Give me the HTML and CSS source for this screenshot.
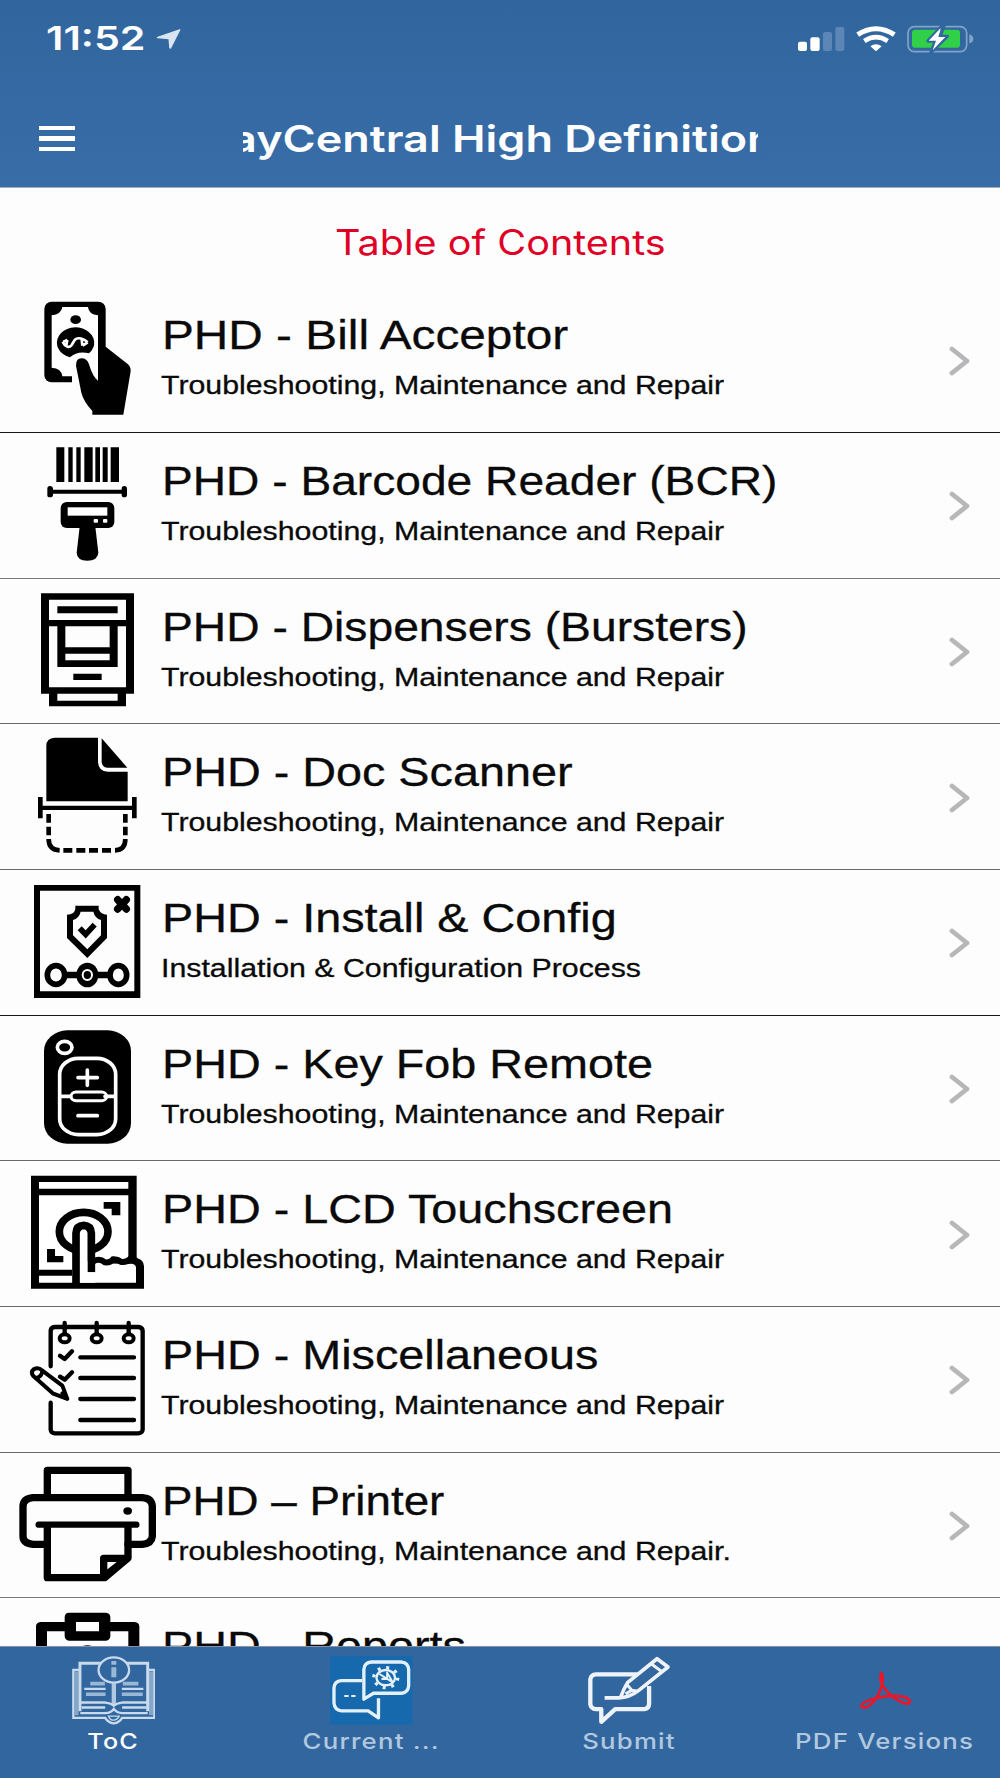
FILE: index.html
```html
<!DOCTYPE html>
<html lang="en">
<head>
<meta charset="utf-8">
<title>PlayCentral High Definition</title>
<link rel="stylesheet" href="styles.css">
</head>
<body>
<div class="screen">
  <header class="header">
    <div class="status">
      <span class="time">11:52</span>
      <svg class="locate" viewBox="466 86 76 60"><path d="M541 87L512 144Q508 148 506 142L504 117L471 114Q465 112 471 109L535 87Q540 86 541 87Z" fill="#d9e5f0"/></svg>
      <div class="indicators">
        <svg width="47" height="26" viewBox="894 76 141 78" fill="#fff"><rect x="894" y="123" width="27" height="28" rx="6"/><rect x="931" y="110" width="28" height="41" rx="6"/><g fill="#5b86b5"><rect x="969" y="94" width="27" height="57" rx="6"/><rect x="1006" y="79" width="27" height="72" rx="6"/></g></svg>
        <svg width="40" height="26" viewBox="1068 76 120 78" fill="none" stroke="#fff"><path d="M1073 102Q1128 66 1183 102" stroke-width="15"/><path d="M1093 121Q1128 98 1163 121" stroke-width="14"/><path d="M1111 137Q1128 124 1145 137L1128 152Z" fill="#fff" stroke="none"/></svg>
        <svg width="67" height="28" viewBox="1222 73 201 84"><rect x="1225" y="78" width="176" height="75" rx="19" fill="none" stroke="#83a4c8" stroke-width="5"/><path d="M1409 101Q1421 105 1421 115T1409 128Z" fill="#83a4c8"/><rect x="1237" y="87" width="144" height="54" rx="9" fill="#30d048"/><path d="M1327 76L1285 121H1307L1294 155L1343 107H1321L1333 76Z" fill="#fff" stroke="#33679f" stroke-width="10" stroke-linejoin="round"/><path d="M1323 82L1287 120H1309L1299 149L1337 109H1315Z" fill="#fff"/></svg>
      </div>
    </div>
    <nav class="nav">
      <div class="menu"><i></i><i></i><i></i></div>
      <h1 class="nav-title"><span>PlayCentral High Definition</span></h1>
    </nav>
  </header>

  <main class="content">
    <h2 class="heading"><span>Table of Contents</span></h2>

    <section class="row dark">
      <svg class="icon" viewBox="0 22 486 437">
        <rect x="133" y="66" width="184" height="242" rx="22"/>
        <path fill="#fff" d="M187 82H264Q266 104 294 107V310H216V290H187Q185 266 155 264V107Q184 104 187 82Z"/>
        <ellipse cx="227" cy="120" rx="16" ry="13"/>
        <path d="M210 233A56 46 0 1 1 267 221Q232 213 210 233Z"/>
        <path d="M188 186C194 200 208 207 215 196L224 181C234 170 252 178 263 188M189 187L202 181M199 197L202 181M248 198L263 188M245 178L247 198" fill="none" stroke="#fff" stroke-width="8"/>
        <path d="M294 303V205L317 201L383 253Q393 262 392 275L370 405H277V394Q251 366 244 339L228 258Q227 237 244 236Q261 236 267 254Q278 292 294 303Z"/>
      </svg>
      <div class="text"><h3 class="t-bill">PHD - Bill Acceptor</h3><p>Troubleshooting, Maintenance and Repair</p></div>
      <svg class="chevron" viewBox="0 0 22 32"><path d="M3 4L18 16L3 28"/></svg>
    </section>

    <section class="row soft">
      <svg class="icon" viewBox="0 459 486 437">
        <path d="M169 502h24v104h-24zM205 502h13v104h-13zM229 502h13v104h-13zM253 502h25v104h-25zM286 502h14v104h-14zM308 502h15v104h-15zM332 502h25v104h-25z"/>
        <path d="M142 626Q142 618 150 618T159 626V629H365V626Q365 618 373 618T381 626V644Q381 652 373 652T365 644V641H159V644Q159 652 150 652T142 644Z"/>
        <rect x="182" y="666" width="161" height="78" rx="18"/>
        <path d="M239 740H286L295 818Q293 842 262 842T230 818Z"/>
        <g fill="#fff"><rect x="203" y="682" width="119" height="25"/><rect x="281" y="717" width="13" height="11" rx="3"/><rect x="309" y="717" width="13" height="11" rx="3"/></g>
      </svg>
      <div class="text"><h3 class="t-barcode">PHD - Barcode Reader (BCR)</h3><p>Troubleshooting, Maintenance and Repair</p></div>
      <svg class="chevron" viewBox="0 0 22 32"><path d="M3 4L18 16L3 28"/></svg>
    </section>

    <section class="row">
      <svg class="icon" viewBox="0 26 486 437">
        <path fill-rule="evenodd" d="M123 69H402V370H378V408H147V370H123ZM147 88V149H378V88ZM172 108H353V129H172ZM147 168V351H378V168H353V290H172V168ZM196 168H329V231H196ZM196 250H329V270H196ZM220 310H305V329H220ZM172 370H353V391H172Z"/>
      </svg>
      <div class="text"><h3 class="t-dispensers">PHD - Dispensers (Bursters)</h3><p>Troubleshooting, Maintenance and Repair</p></div>
      <svg class="chevron" viewBox="0 0 22 32"><path d="M3 4L18 16L3 28"/></svg>
    </section>

    <section class="row">
      <svg class="icon" viewBox="0 463 486 437">
        <path d="M164 504H294V578Q296 606 323 606H383V695H139V529Q139 505 164 504ZM305 506L382 594H322Q305 593 305 575Z"/>
        <path d="M114 682H128V708H396V682H410V746H396V721H128V746H114Z"/>
        <path d="M146 733V759M146 771V797M146 808Q146 841 179 842M376 733V759M376 771V797M376 808Q376 841 345 842M190 842H217M229 842H256M267 842H294M306 842H333" fill="none" stroke="#000" stroke-width="14"/>
      </svg>
      <div class="text"><h3>PHD - Doc Scanner</h3><p>Troubleshooting, Maintenance and Repair</p></div>
      <svg class="chevron" viewBox="0 0 22 32"><path d="M3 4L18 16L3 28"/></svg>
    </section>

    <section class="row dark">
      <svg class="icon" viewBox="0 15 486 437">
        <path fill-rule="evenodd" d="M102 60H421V399H102ZM120 77V379H403V77Z"/>
        <path fill-rule="evenodd" d="M226 122H296V133Q303 149 321 149V219L262 279L201 219V149Q222 149 226 133ZM242 140Q237 160 219 165V211L262 253L303 211V165Q285 160 280 140Z"/>
        <path d="M239 190L257 208L284 179" fill="none" stroke="#000" stroke-width="17"/>
        <path d="M353 104L379 132M379 104L353 132" stroke="#000" stroke-width="22" stroke-linecap="round"/>
        <path d="M190 330H335" stroke="#000" stroke-width="19"/>
        <g fill="#fff" stroke="#000" stroke-width="17"><ellipse cx="168" cy="330" rx="26" ry="28"/><ellipse cx="355" cy="330" rx="25" ry="28"/></g>
        <ellipse cx="262" cy="330" rx="33" ry="37"/><ellipse cx="262" cy="330" rx="14" ry="15" fill="none" stroke="#fff" stroke-width="6"/>
      </svg>
      <div class="text"><h3>PHD - Install &amp; Config</h3><p>Installation &amp; Configuration Process</p></div>
      <svg class="chevron" viewBox="0 0 22 32"><path d="M3 4L18 16L3 28"/></svg>
    </section>

    <section class="row">
      <svg class="icon" viewBox="0 452 486 437">
        <rect x="132" y="495" width="261" height="340" rx="70" ry="62"/>
        <g fill="none" stroke="#fff" stroke-width="11" stroke-linecap="round"><ellipse cx="194" cy="546" rx="22" ry="18"/><rect x="179" y="579" width="168" height="229" rx="56" ry="48"/><path d="M234 637H292M262 614V660M234 751H292M184 693H212M315 693H342"/><rect x="213" y="680" width="107" height="26" rx="15" ry="13" stroke-width="9"/></g>
      </svg>
      <div class="text"><h3>PHD - Key Fob Remote</h3><p>Troubleshooting, Maintenance and Repair</p></div>
      <svg class="chevron" viewBox="0 0 22 32"><path d="M3 4L18 16L3 28"/></svg>
    </section>

    <section class="row">
      <svg class="icon" viewBox="0 19 486 437">
        <path d="M93 63H410V310Q432 316 432 335V402H93Z"/>
        <path d="M117 82H385V102H117ZM117 122H385V310L286 335V384H216V345H117ZM117 363H216V384H117ZM280 325L386 328Q406 325 408 338V384H280Z" fill="#fff"/>
        <ellipse cx="251" cy="231" rx="73" ry="58" fill="#fff" stroke="#000" stroke-width="23"/>
        <path d="M262 300L286 298L300 292V353H262Z" fill="#fff"/>
        <path d="M228 390V235Q230 213 251 212Q272 213 274 235V353" fill="#fff" stroke="#000" stroke-width="23"/>
        <path d="M240 384V320H262V353H286V384Z" fill="#fff"/>
        <path d="M280 320Q298 309 315 323Q330 325 339 314Q352 313 364 322Q380 324 390 313L410 318" fill="none" stroke="#000" stroke-width="18"/>
        <path d="M311 142H361V182H335V162H311ZM141 283H165V304H190V323H141Z"/>
      </svg>
      <div class="text"><h3>PHD - LCD Touchscreen</h3><p>Troubleshooting, Maintenance and Repair</p></div>
      <svg class="chevron" viewBox="0 0 22 32"><path d="M3 4L18 16L3 28"/></svg>
    </section>

    <section class="row">
      <svg class="icon" viewBox="0 456 486 437" stroke="#000" stroke-width="13" stroke-linecap="round" stroke-linejoin="round">
        <g fill="none"><path d="M152 634V527Q153 517 164 516H415Q427 517 428 527V824Q427 834 415 835H164Q153 834 152 824V743"/>
        <path d="M241 607H402M241 669H402M241 732H402M241 795H402"/>
        <path d="M180 602L194 612L216 589M180 665L194 674L216 652"/>
        <path d="M194 504V534M290 504V534M386 504V534"/></g>
        <g fill="#fff" stroke-width="12"><ellipse cx="194" cy="550" rx="15" ry="12"/><ellipse cx="290" cy="550" rx="15" ry="12"/><ellipse cx="386" cy="550" rx="15" ry="12"/>
        <path d="M100 663Q91 651 101 643Q115 635 126 646L187 692L202 732L160 716Z"/><path d="M108 669Q126 665 127 648M187 715L199 728" fill="none"/></g>
      </svg>
      <div class="text"><h3>PHD - Miscellaneous</h3><p>Troubleshooting, Maintenance and Repair</p></div>
      <svg class="chevron" viewBox="0 0 22 32"><path d="M3 4L18 16L3 28"/></svg>
    </section>

    <section class="row soft">
      <svg class="icon" viewBox="0 38 486 437" fill="none" stroke="#000" stroke-width="22" stroke-linejoin="round" stroke-linecap="round">
        <path d="M142 165V90H384V165M140 312H99Q69 309 69 288V197Q70 175 99 172H427Q455 174 457 197V288Q455 309 427 312H384"/>
        <path d="M116 253H409" stroke-width="19"/><path d="M142 258V412H314L384 353V258"/><path d="M311 410V354H382Z"/><ellipse cx="383" cy="212" rx="13" ry="11" fill="#000" stroke="none"/>
      </svg>
      <div class="text"><h3 class="t-printer">PHD – Printer</h3><p>Troubleshooting, Maintenance and Repair.</p></div>
      <svg class="chevron" viewBox="0 0 22 32"><path d="M3 4L18 16L3 28"/></svg>
    </section>

    <section class="row">
      <svg class="icon" viewBox="0 475 486 437">
        <path fill-rule="evenodd" d="M121 547H194V532Q195 519 207 519H318Q330 520 331 532V547H404Q417 548 418 560V880H108V560Q109 548 121 547ZM228 547V575H297V547ZM141 575V850H385V575H331V590Q330 602 318 603H207Q195 602 194 590V575Z"/>
        <ellipse cx="262" cy="645" rx="35" ry="28"/>
      </svg>
      <div class="text"><h3>PHD - Reports</h3><p>Troubleshooting, Maintenance and Repair</p></div>
      <svg class="chevron" viewBox="0 0 22 32"><path d="M3 4L18 16L3 28"/></svg>
    </section>
  </main>

  <footer class="tabs">
    <div class="tab active">
      <svg viewBox="215 648 250 206" fill="none" stroke="#c8daeb" stroke-width="7">
        <path d="M239 690H219V834H315Q323 848 341 851Q358 848 366 834H463V690H443"/><path d="M229 695V826M453 695V826" stroke-width="12" opacity=".55"/>
        <path d="M303 670H239V814M379 670H443V814" stroke-width="9"/><path d="M341 730V794" stroke-width="13" opacity=".85"/>
        <path d="M240 788H315Q334 790 341 798Q348 790 366 788H443M244 803H315M366 803H440M240 820H315Q333 819 341 807Q350 819 366 820H443"/>
        <path d="M270 731H314M368 731H415M257 763H316M365 763H428" stroke-width="11" opacity=".7"/><path d="M252 747H316M365 747H430" stroke-width="7"/>
        <path d="M325 829H357Q352 840 341 841T325 829Z" fill="#31669f" stroke-width="4"/>
        <ellipse cx="341" cy="690" rx="46" ry="38" fill="#31669f"/><path d="M341 663V674M341 682V712" stroke-width="15" opacity=".7"/>
      </svg><span>ToC</span>
    </div>
    <div class="tab">
      <svg viewBox="991 648 250 206" fill="none" stroke="#e3f1fb" stroke-width="10" stroke-linejoin="round">
        <rect x="991" y="648" width="248" height="206" fill="#1769ad" stroke="none"/>
        <path d="M1088 722H1025Q1004 724 1003 744V790Q1005 811 1025 813H1106L1137 834V775"/>
        <path d="M1093 778V688Q1095 667 1116 666H1207Q1226 668 1228 688V738Q1226 758 1207 760H1122Z"/>
        <ellipse cx="1159" cy="713" rx="28" ry="23" stroke-width="7"/><ellipse cx="1159" cy="713" rx="36" ry="30" stroke-width="10" stroke-dasharray="9 17"/><path d="M1140 702L1180 727L1163 698V713L1146 718" stroke-width="6"/>
        <path d="M1034 768H1047M1055 768H1068" stroke-width="6"/>
      </svg><span class="wide">Current ...</span>
    </div>
    <div class="tab">
      <svg viewBox="265 648 250 206" fill="none" stroke="#edf3f9" stroke-width="13" stroke-linejoin="round">
        <path d="M414 703H289Q274 704 272 718V793Q274 807 289 808H305V846L347 808H435Q448 807 449 793V738"/>
        <path d="M315 774H358Q390 773 416 753L506 681L473 656L384 728Q373 746 364 770" stroke-width="11"/><path d="M382 734L397 751L416 754M455 671L489 696M397 751L378 762" stroke-width="9"/>
      </svg><span class="wide">Submit</span>
    </div>
    <div class="tab">
      <svg viewBox="1030 648 250 206" fill="none" stroke="#ed1528" stroke-width="8" stroke-linejoin="round"><path d="M1142 699Q1136 720 1147 738Q1165 764 1192 781Q1225 800 1229 784Q1225 771 1190 768Q1150 766 1112 779Q1080 790 1083 800Q1092 809 1112 793Q1136 768 1144 735Q1150 708 1142 699Z"/></svg><span class="wide">PDF Versions</span>
    </div>
  </footer>
</div>
</body>
</html>
```
FILE: styles.css
```css
* { box-sizing: border-box; margin: 0; padding: 0; }
body { width: 1000px; height: 1778px; overflow: hidden; background: #fdfdfd; font-family: "Liberation Sans", Arial, sans-serif; color: #0a0a0a; }
.screen { width: 1000px; height: 1778px; display: flex; flex-direction: column; overflow: hidden; }
svg { display: block; flex: none; }
h1, h2, h3, p { font-weight: 400; white-space: nowrap; }

.header { flex: none; height: 188px; background: linear-gradient(#31659d, #386da8); border-bottom: 1px solid #a9b0bb; color: #fff; font-family: Inter, sans-serif; }
.status { height: 77px; padding: 0 26px 0 46px; display: flex; align-items: center; }
.time { width: 110px; font-size: 33px; font-weight: 600; line-height: 77px; transform: scaleX(1.247); transform-origin: left; }
.locate { width: 25px; height: 20px; }
.indicators { margin-left: auto; display: flex; align-items: center; gap: 11px; }
.nav { height: 110px; padding: 13px 0 0 39px; display: flex; align-items: center; }
.menu { width: 36px; display: grid; gap: 6px; flex: none; }
.menu i { height: 4.5px; background: #fff; }
.nav-title { width: 515px; height: 60px; margin-left: 168px; padding-right: 36px; overflow: hidden; display: flex; justify-content: center; font-size: 37px; line-height: 59px; }
.nav-title span { flex: none; font-weight: 600; transform: scaleX(1.215); }

.content { flex: 1; min-height: 0; overflow: hidden; }
.heading { height: 99.3px; text-align: center; color: #df0026; font: 400 35px/108px Inter, sans-serif; }
.heading span { display: inline-block; transform: scaleX(1.13); }

.row { height: 145.67px; display: flex; align-items: flex-start; border-bottom: 1px solid #686868; }
.row.dark { border-bottom-color: #181818; }
.row.soft { border-bottom-color: #777; }
.icon { width: 162px; height: 145.67px; }
.text { flex: 1; padding-top: 24px; }
.text h3 { font-size: 40.7px; line-height: 48px; transform: scaleX(1.149); transform-origin: left; -webkit-text-stroke: .3px; }
.text p { margin: 10px 0 0 -1px; font-size: 26.2px; line-height: 32px; transform: scaleX(1.157); transform-origin: left; -webkit-text-stroke: .3px; }
/* Per-title widths */
.text .t-bill { transform: scaleX(1.174); }
.text .t-barcode { transform: scaleX(1.134); }
.text .t-dispensers { transform: scaleX(1.136); }
.text .t-printer { transform: scaleX(1.125); }
.chevron { width: 22px; height: 32px; margin: 57.5px 29px 0 0; fill: none; stroke: #b7b7b9; stroke-width: 4.8; stroke-linecap: round; stroke-linejoin: round; }

.tabs { flex: none; width: 1028px; height: 132px; margin-left: -16px; padding-top: 9px; display: grid; grid-template-columns: 258px 258px 258px 254px; background: #31669f; border-top: 1px solid #8793a5; font-family: Inter, sans-serif; }
.tab { display: flex; flex-direction: column; align-items: center; color: #b2c8df; }
.tab.active { color: #fff; }
.tab svg { width: 83px; height: 68.5px; }
.tab span { margin-top: 2px; font-size: 21.5px; font-weight: 500; line-height: 28px; letter-spacing: 1px; transform: scaleX(1.17); white-space: nowrap; }
.tab .wide { transform: scaleX(1.2); }
```
